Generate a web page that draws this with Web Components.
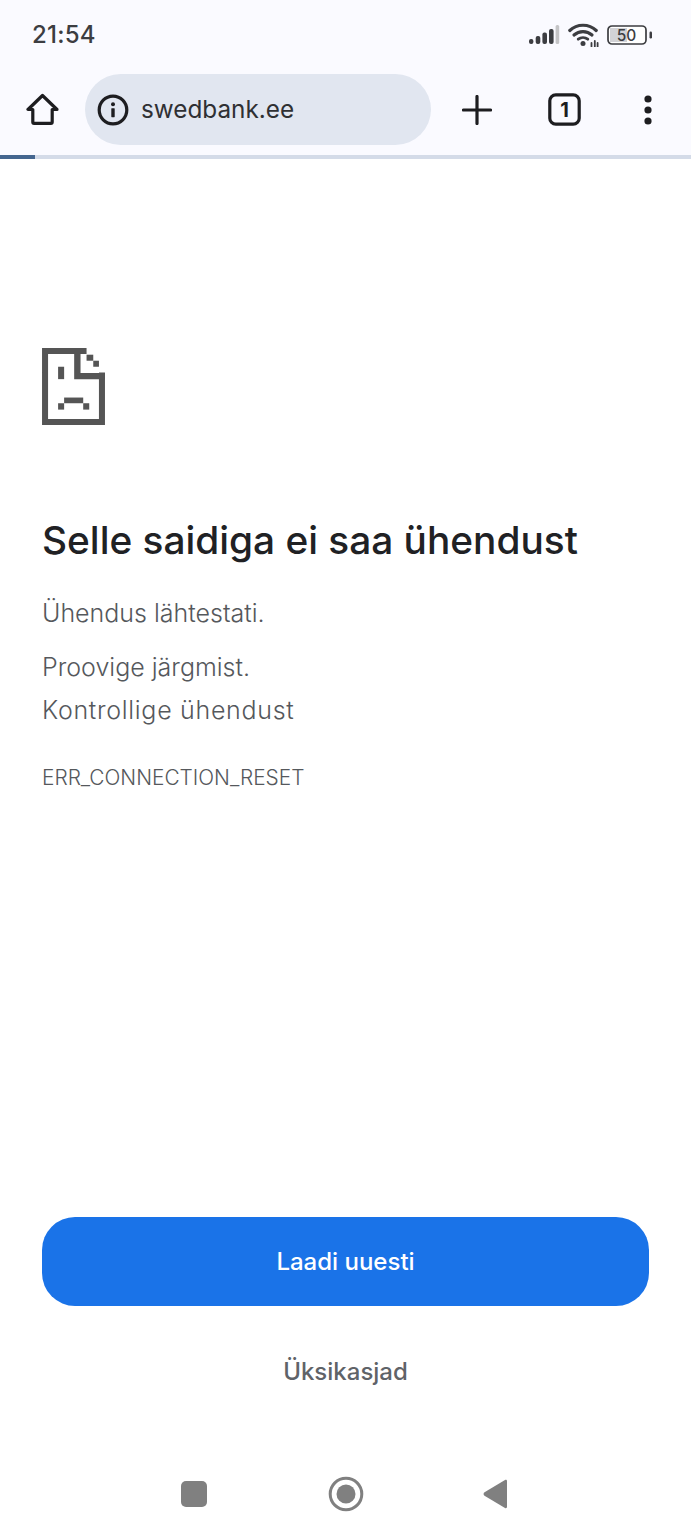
<!doctype html>
<html lang="et"><head><meta charset="utf-8"><style>
html,body{margin:0;padding:0;background:#fff}
body{width:691px;height:1536px;overflow:hidden;font-family:Inter,"Noto Sans",sans-serif}
</style></head><body>
<browser-shell>
<status-bar></status-bar>
<browser-toolbar url="swedbank.ee" tabs="1"></browser-toolbar>
<load-progress></load-progress>
<error-page></error-page>
<nav-bar></nav-bar>
</browser-shell>
<script>
function def(name,html){customElements.define(name,class extends HTMLElement{constructor(){super();this.attachShadow({mode:'open'}).innerHTML=typeof html==='function'?html(this):html}
connectedCallback(){if(typeof html==='function')this.shadowRoot.innerHTML=html(this)}})}
def('browser-shell',`<style>:host{display:flex;flex-direction:column;width:691px;height:1536px}</style><slot></slot>`);
def('status-bar',`<style>:host{display:flex;align-items:center;justify-content:space-between;height:69px;padding:0 39px 0 32px;background:#fafaff;color:#3c3d41;font:500 24px/1 Inter,sans-serif}
.r{display:flex;align-items:center;gap:8px}svg{display:block}
.time{letter-spacing:.2px}
</style><span class="time">21:54</span><span class="r">
<svg width="31" height="20" viewBox="0 0 31 20"><rect x="0" y="14" width="4.4" height="5" rx="2" fill="#3c3d41"/><rect x="6.7" y="11" width="4.6" height="8" rx="2" fill="#3c3d41"/><rect x="13.4" y="7.5" width="4.6" height="11.5" rx="2" fill="#3c3d41"/><rect x="20" y="4" width="4.6" height="15" rx="2" fill="#3c3d41"/><rect x="26.6" y="0" width="3.6" height="19" rx="1.5" fill="#c4c4c6"/></svg>
<svg width="31" height="24" viewBox="0 0 31 24" fill="none" stroke="#3c3d41" stroke-linecap="round"><path d="M1.800 7.500C9 .5 21 .5 28.200 7.500" stroke-width="3.200"/><path d="M6 12c5.200-4.600 12.800-4.600 18 0" stroke-width="3.200"/><path d="M10.200 16.200c2.800-2.200 6.800-2.200 9.600 0" stroke-width="2.800"/><circle cx="15" cy="20.500" r="2.500" fill="#3c3d41" stroke="none"/><path d="M23.500 20v3.500M26.800 18v5.500M29.600 20v3.500" stroke-width="1.800"/></svg>
<svg width="45" height="20" viewBox="0 0 45 20"><rect x="1" y="1" width="38" height="18" rx="4" fill="#fff" stroke="#3c3d41" stroke-width="1.700"/><path d="M3 3h17v14H3z" fill="#d2d2d6"/><text x="19.500" y="15.500" text-anchor="middle" font-family="Inter,sans-serif" font-size="15.500" fill="#3c3d41">50</text><rect x="42.500" y="6.500" width="2.500" height="7" rx="1.200" fill="#3c3d41"/></svg>
</span>`);
def('browser-toolbar',el=>`<style>:host{display:flex;align-items:center;height:86px;padding:0 26px 5px 26px;box-sizing:border-box;background:#fafaff;color:#1d1d20}
svg{display:block;flex:none}
.pill{width:346px;height:71px;border-radius:36px;background:#e1e6f0;margin-left:26px;display:flex;align-items:center;padding-left:12px;box-sizing:border-box;gap:12px;font:400 24.300px/1 Inter,sans-serif;color:#2f3033}
.plus{margin-left:31px}.tab{margin-left:56px}.more{margin-left:60px}
</style>
<svg width="33" height="33" viewBox="0 0 33 33" fill="none" stroke="#1d1d20" stroke-width="3.200" stroke-linejoin="round"><path d="M16.500 2.500 2 16.500h4.800v12.600c0 .8.500 1.300 1.300 1.300h16.800c.8 0 1.300-.5 1.300-1.300V16.500H31z"/></svg>
<div class="pill"><svg width="32" height="32" viewBox="0 0 32 32"><circle cx="16" cy="16" r="13.800" fill="none" stroke="#1d1d20" stroke-width="3.200"/><rect x="14.300" y="14.200" width="3.400" height="9" rx=".6" fill="#1d1d20"/><circle cx="16" cy="10.200" r="2" fill="#1d1d20"/></svg><span>${el.getAttribute('url')||''}</span></div>
<svg class="plus" width="30" height="30" viewBox="0 0 30 30" stroke="#1d1d20" stroke-width="3.200" stroke-linecap="round"><path d="M15 1.500v27M1.500 15h27"/></svg>
<svg class="tab" width="33" height="33" viewBox="0 0 33 33"><rect x="1.800" y="1.800" width="29.400" height="29.400" rx="6" fill="none" stroke="#1d1d20" stroke-width="3.200"/><text x="16.500" y="23.800" text-anchor="middle" font-family="Inter,sans-serif" font-weight="700" font-size="20" fill="#1d1d20">${el.getAttribute('tabs')||''}</text></svg>
<svg class="more" width="14" height="30" viewBox="0 0 14 30" fill="#1d1d20"><circle cx="7" cy="4" r="3.600"/><circle cx="7" cy="15" r="3.600"/><circle cx="7" cy="26" r="3.600"/></svg>`);
def('load-progress',`<style>:host{display:block;height:4px;background:#d4dbe8;margin-bottom:0}div{width:35px;height:100%;background:#44668f}</style><div></div>`);
def('error-page',`<style>:host{display:flex;flex-direction:column;flex:1;padding:189px 42px 0;color:#5f6368;font-family:Inter,sans-serif;min-height:0}
svg{display:block}
h1{margin:92px 0 0;font:500 38.800px/46px Inter,sans-serif;color:#202124;white-space:nowrap}
p{margin:0;font-size:25px;font-weight:300;color:#55585c;line-height:42px;white-space:nowrap}
.a{margin-top:29px;letter-spacing:0}.b{margin-top:12px;letter-spacing:0}
.c{margin-top:1px;letter-spacing:.7px}
.code{margin-top:33px;font-size:20.850px;line-height:28px}
.spacer{flex:1}
button{display:block;width:607px;height:89px;border:0;border-radius:33px;background:#1a73e8;color:#fff;font:500 24px/1 Inter,sans-serif;padding:0}
.d{align-self:center;margin-top:46px;margin-bottom:0;font:500 24px/40px Inter,sans-serif;color:#5f6368}
</style>
<svg width="63" height="77" viewBox="0 0 188 230" fill="#555"><path d="M0 0H133V18H18V212H170V73H188V230H0Z"/><path d="M96 18H115V75H188V93H96Z"/><rect x="133" y="20" width="20" height="18"/><rect x="153" y="38" width="17" height="18"/><rect x="48" y="56" width="18" height="37"/><rect x="66" y="148" width="57" height="17"/><rect x="48" y="165" width="18" height="19"/><rect x="123" y="165" width="18" height="19"/></svg>
<h1>Selle saidiga ei saa ühendust</h1>
<p class="a">Ühendus lähtestati.</p>
<p class="b">Proovige järgmist.</p>
<p class="c">Kontrollige ühendust</p>
<p class="code">ERR_CONNECTION_RESET</p>
<div class="spacer"></div>
<button>Laadi uuesti</button>
<div class="d">Üksikasjad</div>`);
def('nav-bar',`<style>:host{display:flex;align-items:center;justify-content:center;box-sizing:border-box;padding:60px 3px 0 0;height:144px}
svg{display:block}</style>
<svg width="26" height="26" viewBox="0 0 26 26" style="margin-right:121px"><rect width="26" height="26" rx="5" fill="#808080"/></svg>
<svg width="36" height="36" viewBox="0 0 36 36" style="margin-right:119px"><circle cx="18" cy="18" r="15.800" fill="none" stroke="#808080" stroke-width="3"/><circle cx="18" cy="18" r="9.500" fill="#808080"/></svg>
<svg width="24" height="30" viewBox="0 0 24 30"><path d="M22 1 1.500 13.300a2 2 0 0 0 0 3.400L22 29c1 .5 2 0 2-1V2c0-1-1-1.500-2-1z" fill="#808080"/></svg>`);
</script>
</body></html>
